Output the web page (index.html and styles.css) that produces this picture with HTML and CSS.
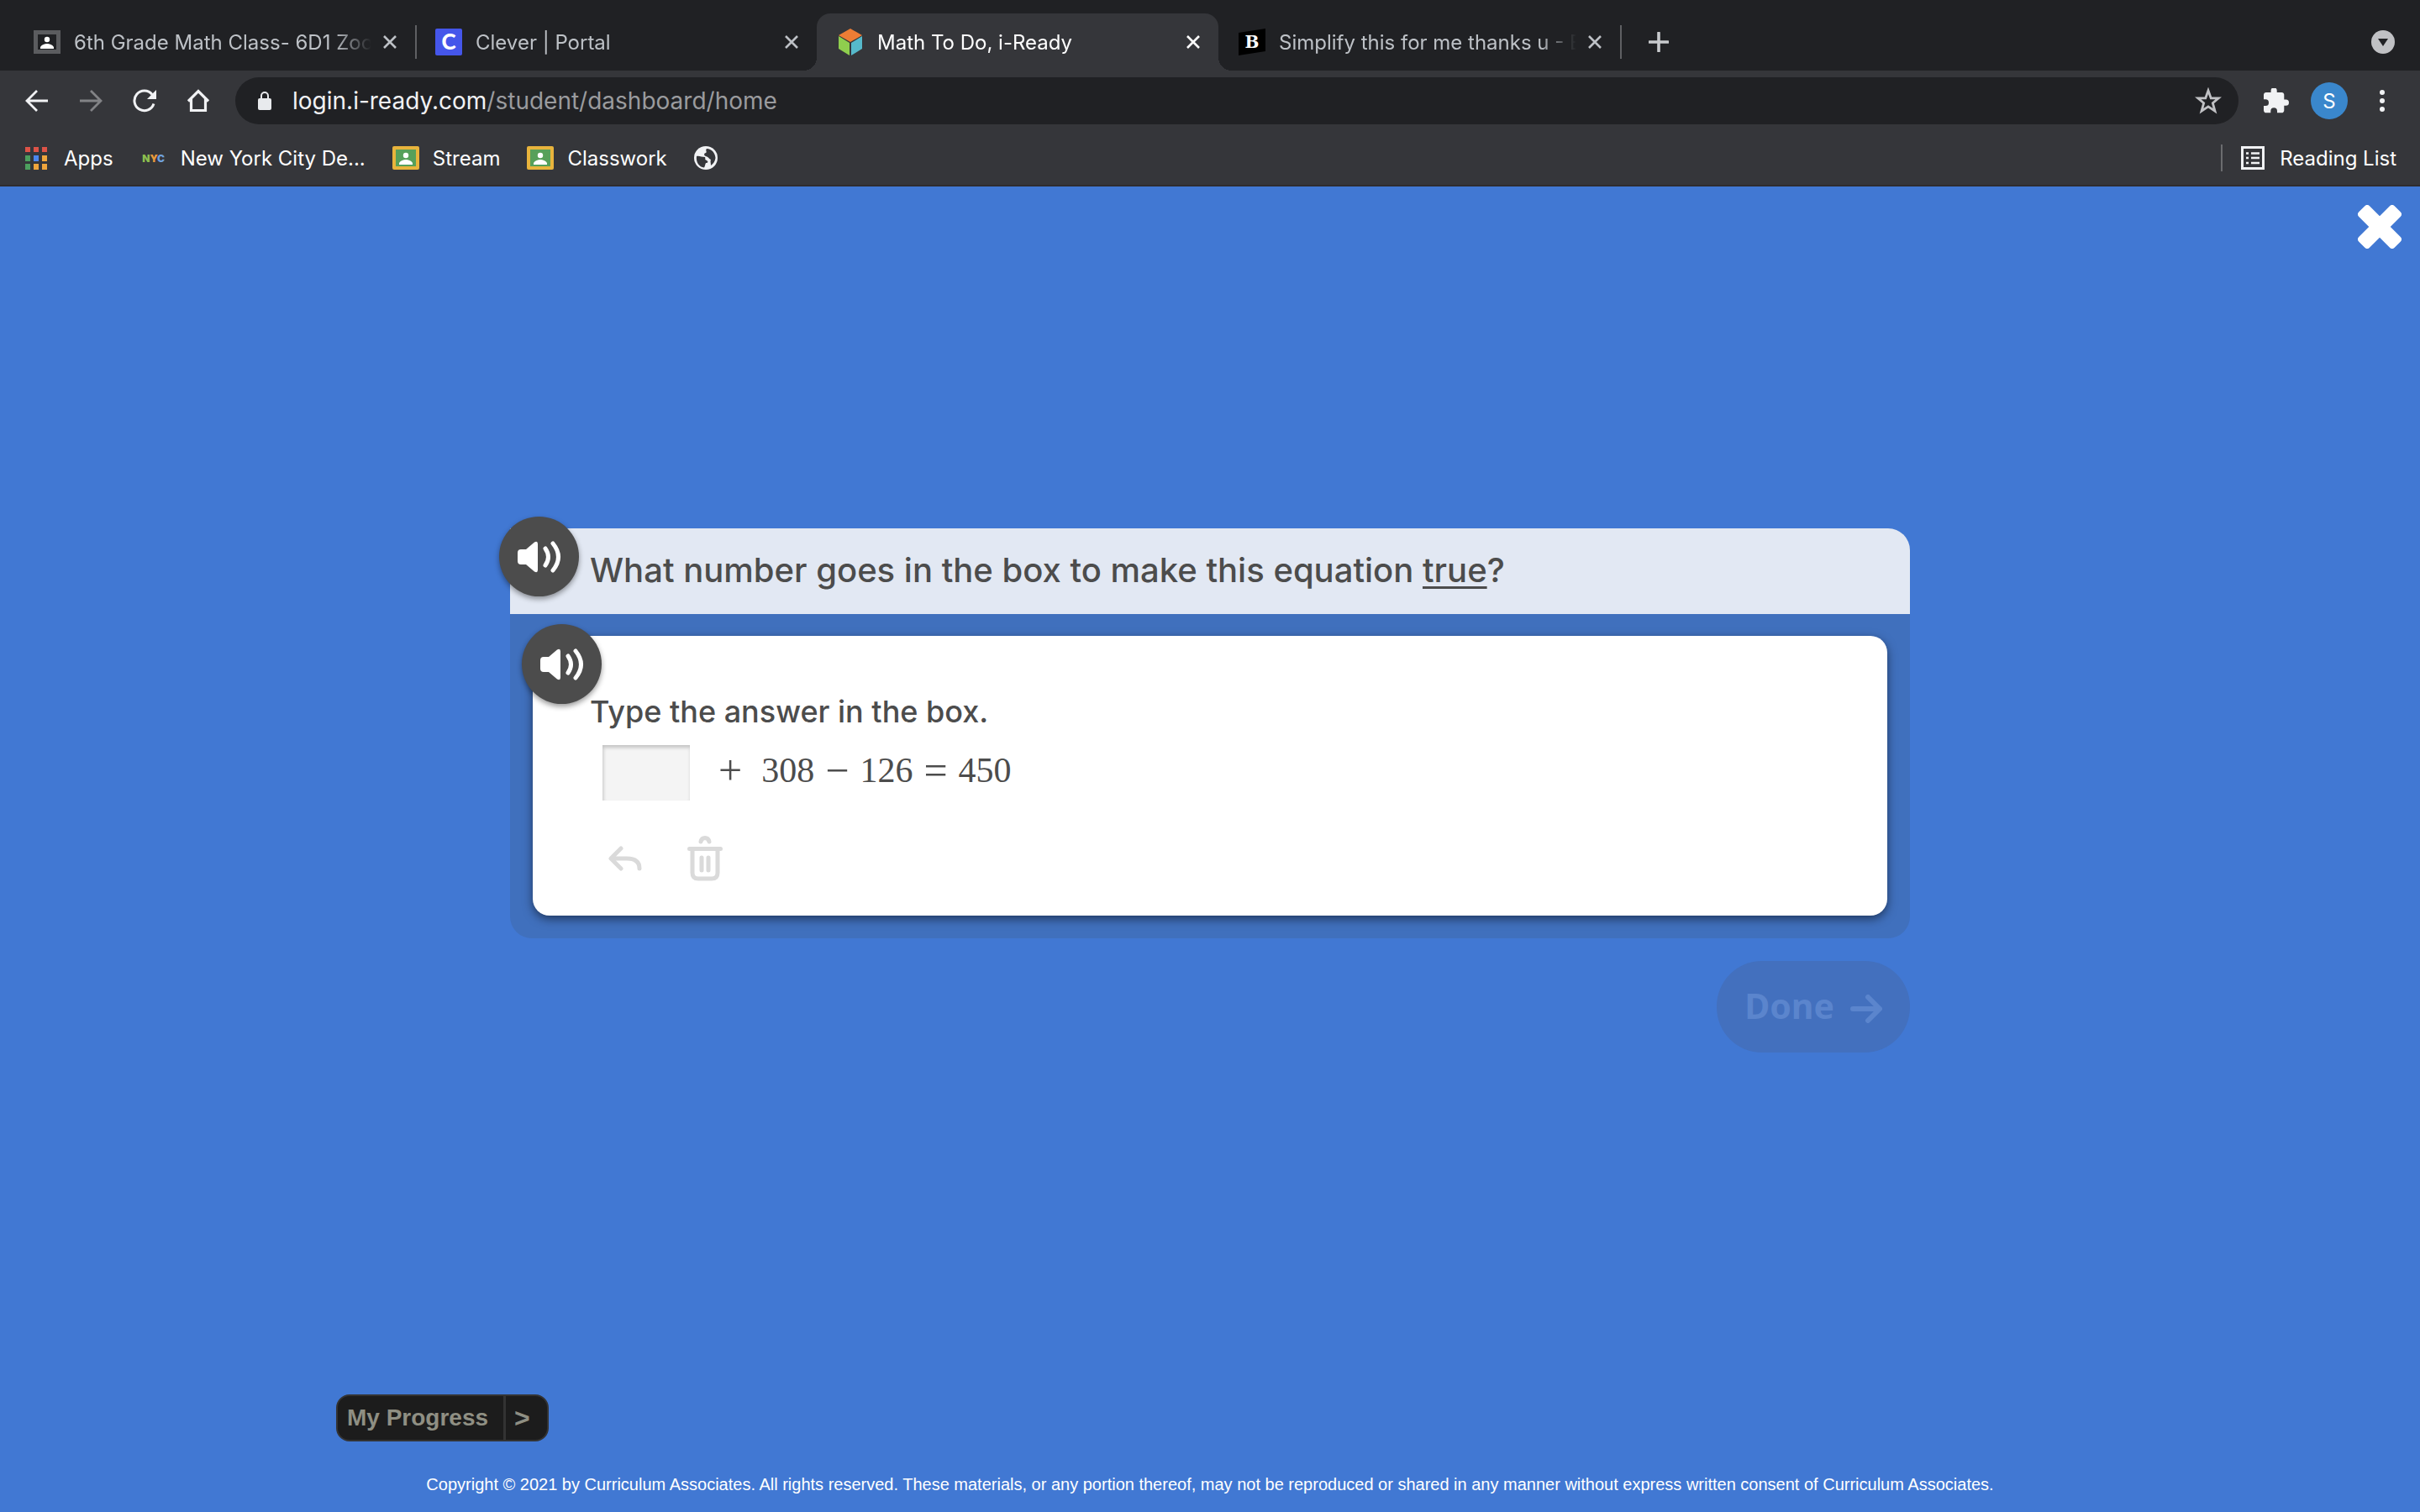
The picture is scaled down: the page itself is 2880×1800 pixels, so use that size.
FILE: index.html
```html
<!DOCTYPE html>
<html lang="en">
<head>
    <meta charset="UTF-8">
    <meta name="viewport" content="width=device-width, initial-scale=1.0">
    <title>Math To Do, i-Ready</title>
    <link rel="stylesheet" href="styles.css">
</head>
<body>

    <svg class="defs" aria-hidden="true">
        <symbol id="close" viewBox="0 0 16 16"><path d="M1 1L15 15M15 1L1 15" fill="none" stroke="currentColor" stroke-width="2.6"/></symbol>
        <symbol id="arrow" viewBox="0 0 28 28"><path d="M27 14H3M14 2L2 14L14 26" fill="none" stroke="currentColor" stroke-width="2.8"/></symbol>
        <symbol id="classroom" viewBox="0 0 32 28">
            <rect width="32" height="28" rx="2" fill="#e8b43c"/>
            <rect x="4" y="4" width="24" height="20" fill="#57a05a"/>
            <circle cx="16" cy="11" r="3.2" fill="#fff"/>
            <path d="M8 22v-2c2-3 5-4 8-4s6 1 8 4v2z" fill="#fff"/>
        </symbol>
        <symbol id="speaker" viewBox="0 0 52 38">
            <path d="M4 10h6L20 1.500q4-2 4 2v31q0 4-4 2L10 28H4q-4 0-4-4V14q0-4 4-4z" fill="#fff"/>
            <path d="M33 9q7 10 0 20M42 3q13 16 0 32" fill="none" stroke="#fff" stroke-width="5" stroke-linecap="round"/>
        </symbol>
    </svg>

    <div class="browser">
        <div class="tabs">
            <div class="tab">
                <svg class="favicon" viewBox="0 0 32 32">
                    <rect x="2.500" y="4.500" width="27" height="23" fill="#202124" stroke="#5b5c5f" stroke-width="5"/>
                    <circle cx="16" cy="13" r="3.2" fill="#fff"/>
                    <path d="M8 24v-2c2-3 5-4 8-4s6 1 8 4v2z" fill="#fff"/>
                </svg>
                <span class="tab-title">6th Grade Math Class- 6D1 Zoom</span>
                <button class="tab-close" aria-label="Close tab"><svg><use href="#close"/></svg></button>
            </div>
            <div class="tab divided">
                <svg class="favicon" viewBox="0 0 32 32">
                    <rect width="32" height="32" rx="2" fill="#4556ea"/>
                    <text x="16" y="25" class="logo-c">C</text>
                </svg>
                <span class="tab-title">Clever | Portal</span>
                <button class="tab-close" aria-label="Close tab"><svg><use href="#close"/></svg></button>
            </div>
            <div class="tab active">
                <svg class="favicon" viewBox="0 0 32 32">
                    <path d="M16 0L30 8L16 16L2 8z" fill="#ed7d35"/>
                    <path d="M2 9L15 17V32L2 24z" fill="#8fce4e"/>
                    <path d="M30 9L17 17V32L30 24z" fill="#56b9cb"/>
                </svg>
                <span class="tab-title">Math To Do, i-Ready</span>
                <button class="tab-close" aria-label="Close tab"><svg><use href="#close"/></svg></button>
            </div>
            <div class="tab">
                <svg class="favicon" viewBox="0 0 32 32">
                    <path d="M0 5L32 0V27L0 32z" fill="#000"/>
                    <text x="16" y="23" class="logo-b">B</text>
                </svg>
                <span class="tab-title">Simplify this for me thanks u - Brainly</span>
                <button class="tab-close" aria-label="Close tab"><svg><use href="#close"/></svg></button>
            </div>
            <button class="new-tab" aria-label="New tab">
                <svg viewBox="0 0 24 24"><path d="M12 1V23M1 12H23" stroke="currentColor" stroke-width="3.600" stroke-linecap="round"/></svg>
            </button>
            <button class="tab-search" aria-label="Search tabs">
                <svg viewBox="0 0 28 28"><circle cx="14" cy="14" r="14" fill="#c0c1c4"/><path d="M8 10H20L14 19z" fill="#202124"/></svg>
            </button>
        </div>

        <div class="toolbar">
            <button class="nav" aria-label="Back"><svg><use href="#arrow"/></svg></button>
            <button class="nav forward" aria-label="Forward"><svg><use href="#arrow"/></svg></button>
            <button class="nav" aria-label="Reload">
                <svg viewBox="0 0 28 28"><path d="M25 17.500A11.800 11.800 0 1 1 23 6.500" fill="none" stroke="currentColor" stroke-width="3"/><path d="M28 1V12H17z" fill="currentColor"/></svg>
            </button>
            <button class="nav" aria-label="Home">
                <svg viewBox="0 0 28 28"><path d="M2 14.500L14 2.500L26 14.500M5.500 12V25.500H22.500V12" fill="none" stroke="currentColor" stroke-width="3.200"/></svg>
            </button>
            <div class="address">
                <svg class="lock" viewBox="0 0 18 22"><rect x="1" y="8" width="16" height="14" rx="2" fill="#e8eaed"/><path d="M5 9V5a4 4 0 0 1 8 0v4" fill="none" stroke="#e8eaed" stroke-width="2"/></svg>
                <span class="url">login.i-ready.com<span class="path">/student/dashboard/home</span></span>
                <svg class="star" viewBox="0 0 30 30"><path d="M15 3.500L18 12H26.500L20 17.500L22.500 26.500L15 21.500L7.500 26.500L10 17.500L3.500 12H12z" fill="none" stroke="#c0c1c4" stroke-width="2.600"/></svg>
            </div>
            <button class="extensions" aria-label="Extensions">
                <svg viewBox="2 1.500 21 21"><path d="M20.500 11H19V7c0-1.100-.9-2-2-2h-4V3.500a2.500 2.500 0 0 0-5 0V5H4c-1.100 0-2 .9-2 2v3.800h1.500a2.700 2.700 0 0 1 0 5.400H2V20c0 1.100.9 2 2 2h3.800v-1.500a2.700 2.700 0 0 1 5.400 0V22H17c1.100 0 2-.9 2-2v-4h1.500a2.500 2.500 0 0 0 0-5z" fill="#f1f2f4"/></svg>
            </button>
            <button class="avatar">S</button>
            <button class="menu" aria-label="Menu">
                <svg viewBox="0 0 6 26"><circle cx="3" cy="3" r="3"/><circle cx="3" cy="13" r="3"/><circle cx="3" cy="23" r="3"/></svg>
            </button>
        </div>

        <div class="bookmarks">
            <a class="bookmark apps" href="#">
                <svg viewBox="0 0 26 27">
                    <path d="M0 0h6v6H0zM10 0h6v6h-6zM20 0h6v6h-6z" fill="#dd5347"/>
                    <path d="M0 10h6v7H0zM0 20h6v7H0z" fill="#4c9f5e"/>
                    <path d="M10 10h6v7h-6z" fill="#4c86ee"/>
                    <path d="M20 10h6v7h-6zM10 20h6v7h-6zM20 20h6v7h-6z" fill="#efa53c"/>
                </svg>Apps</a>
            <a class="bookmark" href="#"><span class="nyc"><b>N</b><b>Y</b><b>C</b></span>New York City De...</a>
            <a class="bookmark" href="#"><svg class="class-icon"><use href="#classroom"/></svg>Stream</a>
            <a class="bookmark" href="#"><svg class="class-icon"><use href="#classroom"/></svg>Classwork</a>
            <a class="bookmark" href="#" aria-label="Untitled bookmark">
                <svg class="globe" viewBox="0 0 28 28"><circle cx="14" cy="14" r="14" fill="#f1f2f4"/><path d="M3 12C6 11 9 13 13 13C14 15 12 16 15 17C17 18 17 20 14 20C13 22 13 24 12 25.500C6 25 2 19 3 12zM15 3C21 3 25 8 25.500 14C25 18 23 21 20 23C20 20 19 18 20 16C17 15 18 13 14 12C11 11 12 8 14 8C16 7 13 5 15 3z" fill="#35363a"/></svg>
            </a>
            <a class="reading" href="#">
                <svg viewBox="0 0 28 28"><rect x="1.500" y="1.500" width="25" height="25" fill="none" stroke="#f1f2f4" stroke-width="3"/><path d="M6 8.500h3M6 14h3M6 20h3M12 8.500h10M12 14h10M12 20h10" stroke="#f1f2f4" stroke-width="2.600"/></svg>Reading List</a>
        </div>
    </div>

    <main class="lesson">
        <button class="exit" aria-label="Close lesson">
            <svg viewBox="0 0 52 52"><g fill="#fff"><rect x="-4" y="17" width="60" height="18" rx="4" transform="rotate(45 26 26)"/><rect x="-4" y="17" width="60" height="18" rx="4" transform="rotate(-45 26 26)"/></g></svg>
        </button>

        <div class="question">
            <div class="panel">
                <div class="prompt">
                    <button class="speak" aria-label="Read the question"><svg><use href="#speaker"/></svg></button>
                    <h1>What number goes in the box to make this equation <u>true</u>?</h1>
                </div>
                <div class="card">
                    <button class="speak" aria-label="Read the instructions"><svg><use href="#speaker"/></svg></button>
                    <label for="answer">Type the answer in the box.</label>
                    <div class="equation">
                        <input type="text" id="answer">
                        <span class="sign plus">+</span>
                        <span>308</span>
                        <span class="sign">−</span>
                        <span>126</span>
                        <span class="sign">=</span>
                        <span>450</span>
                    </div>
                    <div class="tools">
                        <button class="undo" aria-label="Undo">
                            <svg viewBox="0 0 40 30"><path d="M15 3L3 15L15 27M4 15H22Q37 15 37 27" fill="none" stroke="#dadada" stroke-width="5" stroke-linecap="round" stroke-linejoin="round"/></svg>
                        </button>
                        <button class="trash" aria-label="Clear">
                            <svg viewBox="0 0 42 54"><path d="M2.500 15.500H39.500M6 16V44Q6 51 13 51H29Q36 51 36 44V16M17 26V41M25 26V41M16 7Q17 2.500 21 2.500T26 7" fill="none" stroke="#dadada" stroke-width="5" stroke-linecap="round"/></svg>
                        </button>
                    </div>
                </div>
            </div>
            <button class="done" disabled>Done
                <svg viewBox="0 0 38 34"><path d="M3 17H34M21 3L35 17L21 31" fill="none" stroke="currentColor" stroke-width="6" stroke-linecap="round" stroke-linejoin="round"/></svg>
            </button>
        </div>

        <button class="progress"><span>My Progress</span><span class="more">&gt;</span></button>
        <footer>Copyright © 2021 by Curriculum Associates. All rights reserved. These materials, or any portion thereof, may not be reproduced or shared in any manner without express written consent of Curriculum Associates.</footer>
    </main>

</body>
</html>
```
FILE: styles.css
```css
* {
    box-sizing: border-box;
}

body {
    margin: 0;
    min-height: 100vh;
    display: flex;
    flex-direction: column;
    background-color: #4178d3;
    font-family: Inter, "Liberation Sans", sans-serif;
    color: #fff;
}

button {
    border: none;
    background: none;
    padding: 0;
    font: inherit;
    color: inherit;
    cursor: pointer;
}

svg {
    display: block;
    flex-shrink: 0;
}

.defs {
    position: absolute;
    width: 0;
    height: 0;
}

/* browser bars */
.browser {
    background-color: #35363a;
    border-bottom: 2px solid #2e2c2e;
    font-size: 24px;
}

.tabs {
    display: flex;
    align-items: flex-end;
    height: 84px;
    padding: 0 30px 0 16px;
    background-color: #202124;
}

.tab {
    position: relative;
    display: flex;
    align-items: center;
    flex: 0 1 478px;
    min-width: 0;
    height: 68px;
    padding: 0 22px 0 24px;
    color: #bdc1c6;
}

.tab.active {
    background-color: #35363a;
    border-radius: 16px 16px 0 0;
    color: #fff;
}

.tab.active::before,
.tab.active::after {
    content: "";
    position: absolute;
    bottom: 0;
    left: -16px;
    width: 16px;
    height: 16px;
    background: radial-gradient(circle at 0 0, #202124 16px, #35363a 16px);
}

.tab.active::after {
    left: 100%;
    background: radial-gradient(circle at 100% 0, #202124 16px, #35363a 16px);
}

.tab.divided {
    background: linear-gradient(#5f6063, #5f6063) 0 50% / 2px 40px no-repeat;
}

.favicon {
    width: 32px;
    height: 32px;
}

.logo-c {
    font: 900 26px Lato, sans-serif;
    text-anchor: middle;
    fill: #fff;
}

.logo-b {
    font: bold 20px "DejaVu Serif", serif;
    text-anchor: middle;
    fill: #fff;
}

.tab-title {
    flex: 1;
    margin: 0 14px 0 16px;
    overflow: hidden;
    white-space: nowrap;
    -webkit-mask-image: linear-gradient(to right, #000 calc(100% - 44px), transparent);
    mask-image: linear-gradient(to right, #000 calc(100% - 44px), transparent);
}

.tab-close svg {
    width: 16px;
    height: 16px;
}

.new-tab {
    align-self: center;
    height: 40px;
    margin: 16px 0 0;
    padding-left: 32px;
    border-left: 2px solid #5f6063;
    color: #c8cacd;
}

.new-tab svg {
    width: 24px;
    height: 24px;
}

.tab-search {
    align-self: center;
    margin: 16px 0 0 auto;
}

.tab-search svg {
    width: 28px;
    height: 28px;
}

.toolbar {
    display: flex;
    align-items: center;
    height: 72px;
    padding: 0 42px 0 30px;
    color: #f1f2f4;
}

.nav {
    width: 28px;
    margin-right: 36px;
}

.nav svg {
    width: 28px;
    height: 28px;
}

.nav.forward {
    color: #828386;
    transform: rotate(180deg);
}

.address {
    display: flex;
    align-items: center;
    flex: 1;
    height: 56px;
    margin-right: 30px;
    margin-left: -6px;
    padding: 0 20px 0 26px;
    background-color: #202124;
    border-radius: 28px;
    font-size: 28px;
}

.lock {
    width: 18px;
    height: 22px;
}

.url {
    flex: 1;
    margin-left: 24px;
}

.path {
    color: #9a9b9e;
}

.star {
    width: 32px;
    height: 32px;
}

.extensions svg {
    width: 30px;
    height: 30px;
}

.avatar {
    width: 44px;
    height: 44px;
    margin: 0 38px 0 26px;
    border-radius: 50%;
    background-color: #3a87cc;
    color: #fff;
}

.menu svg {
    width: 6px;
    height: 26px;
    fill: #f1f2f4;
}

.bookmarks {
    display: flex;
    align-items: center;
    gap: 32px;
    height: 64px;
    padding: 0 28px 0 30px;
}

.bookmark,
.reading {
    display: flex;
    align-items: center;
    gap: 16px;
    color: #fff;
    text-decoration: none;
    white-space: nowrap;
}

.apps {
    gap: 20px;
}

.apps svg {
    width: 26px;
    height: 27px;
}

.nyc {
    width: 32px;
    font-size: 12px;
    text-align: center;
    color: #8cbf4f;
}

.nyc b {
    font-weight: 900;
}

.nyc b:nth-child(2) {
    color: #e89a3c;
}

.nyc b:nth-child(3) {
    color: #6fa0dc;
}

.class-icon {
    width: 32px;
    height: 28px;
}

.globe,
.reading svg {
    width: 28px;
    height: 28px;
}

.reading {
    gap: 18px;
    height: 32px;
    margin-left: auto;
    padding-left: 22px;
    border-left: 2px solid #6b6c6f;
}

/* lesson */
.lesson {
    position: relative;
    flex: 1;
    display: flex;
    flex-direction: column;
    padding-top: 407px;
}

.exit {
    position: absolute;
    top: 22px;
    right: 22px;
}

.exit svg {
    width: 52px;
    height: 52px;
}

.question {
    width: 92%;
    max-width: 1666px;
    margin: 0 auto;
    display: flex;
    flex-direction: column;
}

.panel {
    padding-bottom: 27px;
    background-color: #4070bd;
    border-radius: 26px;
    color: #4c4c4c;
}

.prompt {
    position: relative;
    display: flex;
    align-items: center;
    min-height: 102px;
    padding: 0 0 4px 95px;
    background-color: #e2e8f3;
    border-radius: 0 26px 0 0;
}

.prompt h1 {
    margin: 0;
    font-size: 40px;
    font-weight: 500;
}

u {
    text-decoration-thickness: 3px;
    text-underline-offset: 5px;
}

.speak {
    position: absolute;
    top: -14px;
    left: -13px;
    display: flex;
    align-items: center;
    justify-content: center;
    width: 95px;
    height: 95px;
    border-radius: 50%;
    background-color: #4c4c4c;
    box-shadow: 0 3px 6px rgba(0, 0, 0, 0.4);
}

.speak svg {
    width: 52px;
    height: 38px;
}

.card {
    position: relative;
    margin: 26px 27px 0;
    padding: 68px 68px 41px;
    background-color: #fff;
    border-radius: 20px;
    box-shadow: 0 4px 12px rgba(0, 0, 0, 0.5);
}

.card label {
    display: block;
    font-size: 36px;
    font-weight: 500;
    line-height: 44px;
}

.equation {
    display: flex;
    align-items: center;
    gap: 13px;
    height: 66px;
    margin: 18px 0 0 15px;
    font-family: "Liberation Serif", serif;
    font-size: 42px;
}

.equation input {
    width: 104px;
    height: 66px;
    border: none;
    background-color: #f4f4f4;
    box-shadow: inset 1px 3px 4px rgba(0, 0, 0, 0.2);
    font: inherit;
    text-align: center;
}

.equation span {
    padding-bottom: 6px;
}

.equation .sign {
    font-size: 50px;
}

.equation .plus {
    margin: 0 10px 0 21px;
}

.tools {
    display: flex;
    align-items: center;
    gap: 54px;
    margin: 42px 0 0 22px;
}

.undo svg {
    width: 40px;
    height: 30px;
}

.trash svg {
    width: 42px;
    height: 54px;
}

.done {
    align-self: flex-end;
    display: flex;
    align-items: center;
    gap: 19px;
    height: 109px;
    margin-top: 27px;
    padding: 0 33px 4px;
    border-radius: 54px;
    background-color: #4370be;
    color: #5b85cd;
    font-family: "Noto Sans", sans-serif;
    font-size: 41px;
    font-weight: bold;
}

.done svg {
    width: 38px;
    height: 34px;
    margin-top: 8px;
}

.progress {
    align-self: flex-start;
    display: flex;
    height: 56px;
    margin: auto 0 0 400px;
    border: 2px solid #333;
    border-radius: 16px;
    background-color: #1c1c1c;
    color: #8f8f83;
    font-family: "Liberation Sans", Arial, sans-serif;
    font-size: 28px;
    font-weight: bold;
    line-height: 52px;
}

.progress span {
    padding: 0 18px 0 11px;
}

.progress .more {
    padding: 0 20px 0 10px;
    border-left: 3px solid #333;
    font-size: 32px;
}

footer {
    padding: 38px 20px 20px;
    font-family: "Liberation Sans", Arial, sans-serif;
    font-size: 20px;
    line-height: 26px;
    text-align: center;
}
```
